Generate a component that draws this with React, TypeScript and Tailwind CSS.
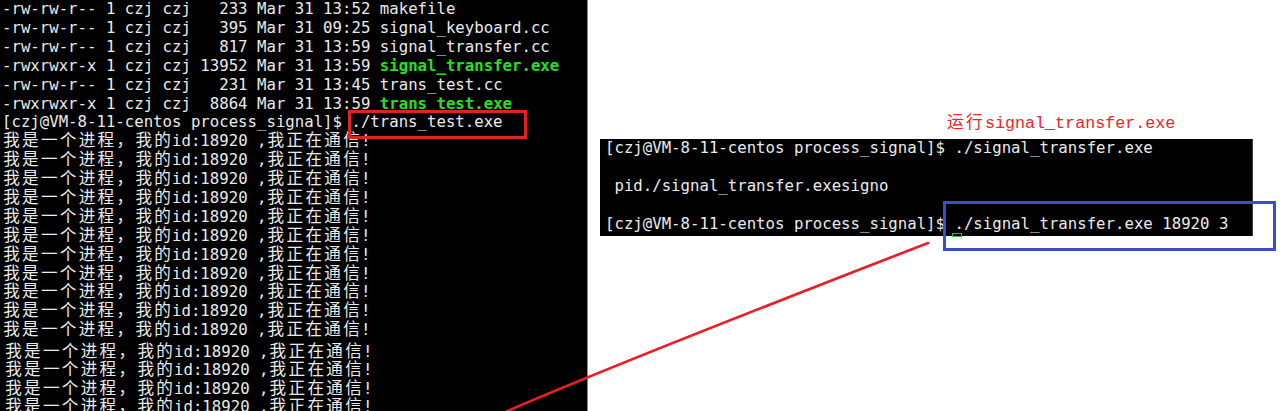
import React from "react";

const isCjk = (c: string) => c.charCodeAt(0) >= 0x2e80;

function Mono({ text, cjkClass }: { text: string; cjkClass: string }) {
  const parts: React.ReactNode[] = [];
  let buf = "";
  const chars = Array.from(text);
  chars.forEach((c, i) => {
    if (isCjk(c)) {
      if (buf) {
        parts.push(buf);
        buf = "";
      }
      parts.push(
        <span key={i} className={cjkClass}>
          {c}
        </span>
      );
    } else {
      buf += c;
    }
  });
  if (buf) parts.push(buf);
  return <>{parts}</>;
}

const lsLines: { pre: string; name: string; green?: boolean }[] = [
  { pre: "-rw-rw-r-- 1 czj czj   233 Mar 31 13:52 ", name: "makefile" },
  { pre: "-rw-rw-r-- 1 czj czj   395 Mar 31 09:25 ", name: "signal_keyboard.cc" },
  { pre: "-rw-rw-r-- 1 czj czj   817 Mar 31 13:59 ", name: "signal_transfer.cc" },
  { pre: "-rwxrwxr-x 1 czj czj 13952 Mar 31 13:59 ", name: "signal_transfer.exe", green: true },
  { pre: "-rw-rw-r-- 1 czj czj   231 Mar 31 13:45 ", name: "trans_test.cc" },
  { pre: "-rwxrwxr-x 1 czj czj  8864 Mar 31 13:59 ", name: "trans_test.exe", green: true },
];

const zh = "我是一个进程，我的id:18920 ,我正在通信!";
const cjkCell = "inline-block w-[18.9px] text-center text-[16.6px] leading-[18px] align-top";

export default function App() {
  return (
    <div className="relative w-[1280px] h-[411px] bg-white overflow-hidden flex">
      {/* Left terminal */}
      <div
        className="relative shrink-0 w-[588px] h-[411px] bg-black border-r border-[#8c8c8c] overflow-hidden text-[#ebebeb] text-[15.7px] leading-[18.9px] whitespace-pre"
        style={{ fontFamily: '"DejaVu Sans Mono", "Noto Sans CJK SC", monospace' }}
      >
        <div className="pl-[2px]">
          {lsLines.map((l, i) => (
            <div key={i}>
              {l.pre}
              <span className={l.green ? "text-[#22e022] font-bold" : ""}>{l.name}</span>
            </div>
          ))}
          <div>[czj@VM-8-11-centos process_signal]$ ./trans_test.exe</div>
          {Array.from({ length: 11 }).map((_, i) => (
            <div key={i} className="h-[18.9px]">
              <Mono text={zh} cjkClass={cjkCell} />
            </div>
          ))}
        </div>
        <div className="pl-[4px] mt-[2.6px]">
          {Array.from({ length: 4 }).map((_, i) => (
            <div key={i} className="h-[18.4px]">
              <Mono text={zh} cjkClass={cjkCell} />
            </div>
          ))}
        </div>
        <div className="absolute left-[348px] top-[110px] w-[179px] h-[29px] border-[3px] border-[#e02222]" />
      </div>

      {/* Right side */}
      <div className="ml-[12px] flex flex-col pt-[114px]">
        <div
          className="pl-[347px] text-[16.7px] leading-[20px] text-[#f02424] whitespace-pre"
          style={{ fontFamily: '"Liberation Mono", "Noto Sans CJK SC", monospace' }}
        >
          <Mono text="运行signal_transfer.exe" cjkClass="inline-block w-[19px] text-left" />
        </div>
        <div
          className="relative mt-[5px] w-[653px] h-[97px] bg-black border-r border-[#3c3c3c] text-[#ebebeb] text-[15.7px] leading-[18.9px] whitespace-pre pl-[5px]"
          style={{ fontFamily: '"DejaVu Sans Mono", "Noto Sans CJK SC", monospace' }}
        >
          <div>[czj@VM-8-11-centos process_signal]$ ./signal_transfer.exe</div>
          <div>&nbsp;</div>
          <div> pid./signal_transfer.exesigno</div>
          <div>&nbsp;</div>
          <div>[czj@VM-8-11-centos process_signal]$ ./signal_transfer.exe 18920 3</div>
          <div className="absolute left-[352px] top-[94px] w-[10px] h-[4px] border border-[#22c022]" />
          <div className="absolute left-[343px] top-[62px] w-[333px] h-[50px] border-[3px] border-[#3d4ecc]" />
        </div>
      </div>

      {/* Red arrow line */}
      <svg
        className="absolute inset-0 pointer-events-none"
        width="1280"
        height="411"
        viewBox="0 0 1280 411"
      >
        <path
          d="M 503 413 C 620 362, 820 285, 928 243"
          fill="none"
          stroke="#ee1c24"
          strokeWidth="2.6"
          strokeLinecap="round"
        />
      </svg>
    </div>
  );
}
